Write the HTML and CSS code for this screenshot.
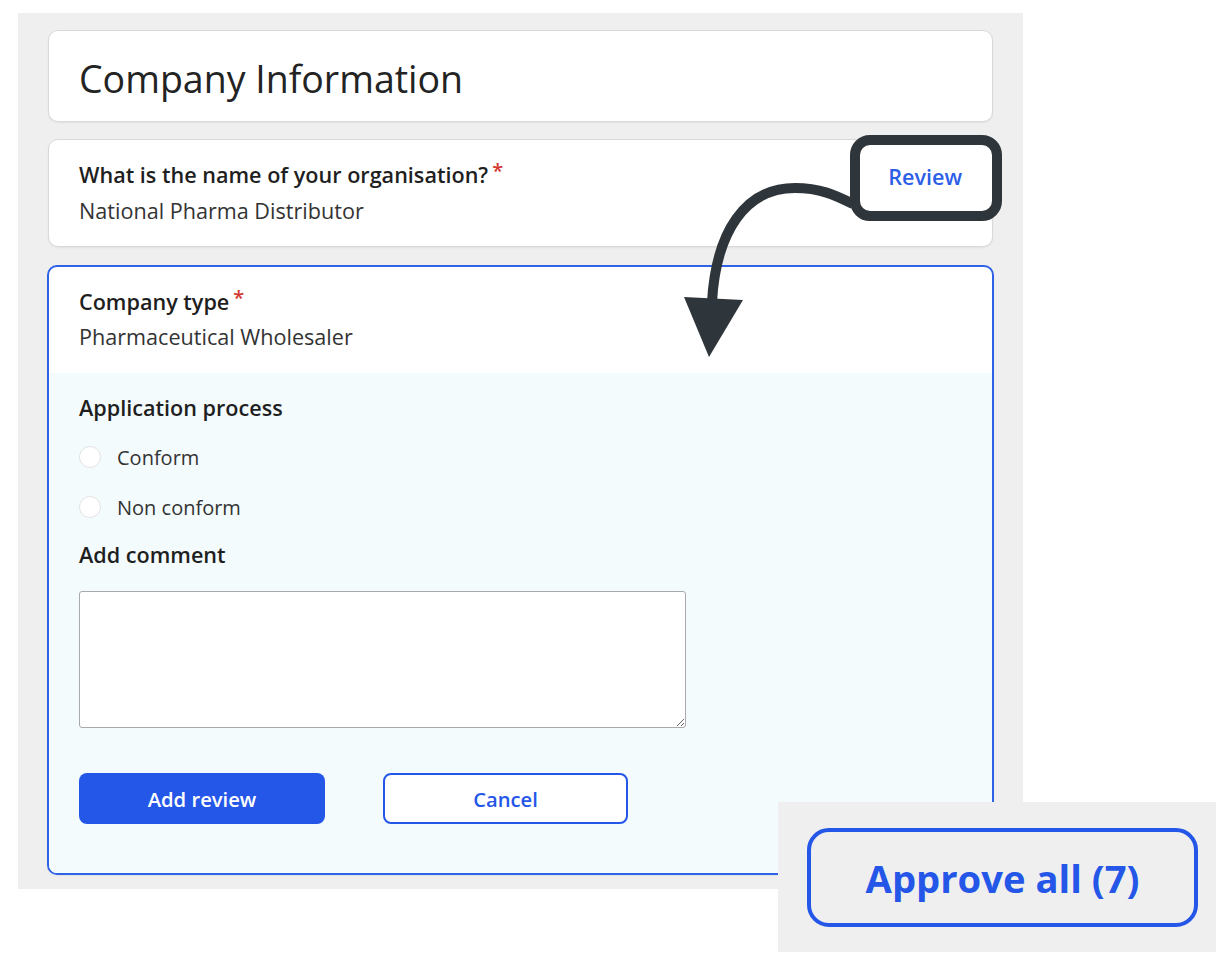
FILE: index.html
```html
<!DOCTYPE html>
<html lang="en">
<head>
<meta charset="utf-8">
<title>Company Information</title>
<link rel="stylesheet" href="styles.css">
</head>
<body>
<main class="panel">
  <section class="card card-title">
    <h1 class="title">Company Information</h1>
  </section>

  <section class="card card-field">
    <div class="field">
      <div class="field-label">What is the name of your organisation?<span class="req">*</span></div>
      <div class="field-value">National Pharma Distributor</div>
    </div>
    <button class="review-btn" type="button">Review</button>
  </section>

  <section class="card card-active">
    <div class="field field-top">
      <div class="field-label">Company type<span class="req">*</span></div>
      <div class="field-value">Pharmaceutical Wholesaler</div>
    </div>
    <div class="review-panel">
      <div class="rp-label">Application process</div>
      <label class="radio-row row-first"><input class="radio" type="radio" name="ap"><span>Conform</span></label>
      <label class="radio-row row-second"><input class="radio" type="radio" name="ap"><span>Non conform</span></label>
      <div class="rp-label rp-comment">Add comment</div>
      <textarea class="comment"></textarea>
      <div class="actions">
        <button class="btn btn-primary" type="button">Add review</button>
        <button class="btn btn-secondary" type="button">Cancel</button>
      </div>
    </div>
  </section>
</main>

<svg class="annotation" width="1232" height="966" viewBox="0 0 1232 966" aria-hidden="true">
  <rect x="855" y="140" width="142" height="76" rx="15" ry="15" fill="none" stroke="#2f363b" stroke-width="10"/>
  <path d="M 853 204 C 835 195, 820 188, 795 188 C 745 188, 716 232, 712 302" fill="none" stroke="#2f363b" stroke-width="10"/>
  <polygon points="684,297 743,300 709,357" fill="#2f363b"/>
</svg>

<div class="approve-callout">
  <button class="approve-btn" type="button">Approve all (7)</button>
</div>
</body>
</html>
```

FILE: styles.css
```css
html, body {
  margin: 0;
  padding: 0;
}

body {
  background: #ffffff;
  font-family: "Open Sans", "Noto Sans", sans-serif;
  color: #222222;
  position: relative;
  width: 1232px;
  min-height: 966px;
  overflow: hidden;
}

.panel {
  margin: 13px 0 0 18px;
  width: 1005px;
  box-sizing: border-box;
  padding: 17px 30px 14px;
  background: #efefef;
  display: flex;
  flex-direction: column;
  gap: 17px;
}

.card {
  background: #ffffff;
  border: 1px solid #d9d9d9;
  border-radius: 10px;
  box-shadow: 0 1px 2px rgba(0, 0, 0, 0.06);
  box-sizing: border-box;
}

.card-title {
  height: 92px;
  display: flex;
  align-items: center;
  padding: 4px 30px 0;
}

.title {
  margin: 0;
  font-size: 37.5px;
  font-weight: 400;
  line-height: 1.2;
  color: #232323;
}

.card-field {
  display: flex;
  justify-content: space-between;
  align-items: flex-start;
  padding: 19px 30px;
}

.field-label {
  font-size: 21.6px;
  font-weight: 600;
  line-height: 32px;
  color: #1f1f1f;
}

.field-value {
  font-size: 21.6px;
  line-height: 32px;
  margin-top: 4px;
  color: #333333;
}

.req {
  color: #d4372f;
  margin-left: 4px;
  font-size: 20px;
  line-height: 0;
  vertical-align: 5px;
}

.review-btn {
  font-family: "Open Sans", "Noto Sans", sans-serif;
  font-size: 21.6px;
  font-weight: 600;
  line-height: 32px;
  color: #2c5ee6;
  background: none;
  border: 0;
  padding: 0;
  margin-top: 2px;
}

.card-active {
  border: 2px solid #2f62e6;
  overflow: hidden;
  margin: 1px -1px 0;
}

.field-top {
  padding: 19px 30px 20px;
}

.field-top .field-value {
  margin-top: 3px;
}

.review-panel {
  background: #f3fbfd;
  padding: 19px 30px 49px;
  display: flex;
  flex-direction: column;
  align-items: flex-start;
}

.rp-label {
  font-size: 21.6px;
  font-weight: 600;
  line-height: 32px;
  color: #1f1f1f;
}

.radio-row {
  display: flex;
  align-items: center;
  gap: 16px;
  height: 32px;
  font-size: 20px;
  color: #333333;
}

.row-first {
  margin-top: 17px;
}

.row-second {
  margin-top: 18px;
}

.radio {
  appearance: none;
  -webkit-appearance: none;
  margin: 0;
  width: 22px;
  height: 22px;
  border-radius: 50%;
  background: #ffffff;
  border: 1px solid #e3e3e3;
  box-sizing: border-box;
}

.rp-comment {
  margin-top: 16px;
}

.comment {
  display: block;
  width: 607px;
  height: 137px;
  box-sizing: border-box;
  margin: 20px 0 0;
  border: 1px solid #a9a9a9;
  border-radius: 3px;
  background: #ffffff;
}

.actions {
  display: flex;
  gap: 58px;
  margin-top: 45px;
}

.btn {
  width: 246px;
  height: 51px;
  box-sizing: border-box;
  border-radius: 8px;
  font-family: "Open Sans", "Noto Sans", sans-serif;
  font-size: 20.2px;
  font-weight: 600;
}

.btn-primary {
  background: #2456e8;
  color: #ffffff;
  border: 0;
}

.btn-secondary {
  width: 245px;
  background: #ffffff;
  color: #2456e8;
  border: 2px solid #2456e8;
}

.annotation {
  position: absolute;
  left: 0;
  top: 0;
  pointer-events: none;
}

.approve-callout {
  position: absolute;
  left: 778px;
  top: 802px;
  width: 438px;
  height: 150px;
  box-sizing: border-box;
  padding: 26px 18px 25px 29px;
  background: #efefef;
  display: flex;
}

.approve-btn {
  flex: 1;
  border: 4px solid #2456e8;
  border-radius: 22px;
  background: transparent;
  color: #2456e8;
  font-family: "Open Sans", "Noto Sans", sans-serif;
  font-size: 38.2px;
  font-weight: 700;
  padding: 0;
}
```
